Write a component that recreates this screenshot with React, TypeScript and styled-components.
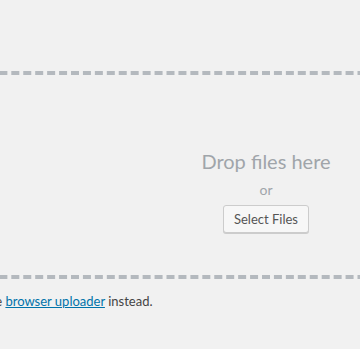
import React from 'react';
import styled, { createGlobalStyle } from 'styled-components';

const GlobalStyle = createGlobalStyle`
    html, body {
        margin: 0;
        padding: 0;
        background: #f1f1f1;
        overflow: hidden;
    }
    body {
        font-family: "Segoe UI", Lato, "Open Sans", sans-serif;
        color: #444;
        font-size: 13px;
        line-height: 1.4em;
    }
`;

const UploaderWrapper = styled.div`
    width: 1154px;
    margin-left: -311px;
    padding-top: 71px;
`;

const DropArea = styled.div`
    border: 4px dashed #b4b9be;
    height: 200px;
`;

const DropInside = styled.div`
    width: 250px;
    margin: 72px auto 0;
    text-align: center;
`;

const DropText = styled.p<{ $big?: boolean }>`
    margin: 5px auto;
    color: #a0a5aa;
    font-size: ${(p) => (p.$big ? '20px' : '14px')};
    line-height: ${(p) => (p.$big ? '28px' : '20px')};
`;

const SelectButton = styled.button`
    display: inline-block;
    height: 28px;
    margin: 0;
    padding: 0 10px 1px;
    font-family: inherit;
    font-size: 13px;
    line-height: 26px;
    color: #555;
    background: #f7f7f7;
    border: 1px solid #ccc;
    border-radius: 3px;
    box-shadow: 0 1px 0 #ccc;
    cursor: pointer;
    white-space: nowrap;
    &:hover {
        background: #fafafa;
        border-color: #999;
        color: #23282d;
    }
`;

const BypassNote = styled.p`
    margin: 13px 0;
    font-size: 13px;
    line-height: 1.5;
    a {
        color: #0073aa;
        text-decoration: underline;
    }
`;

export default function App() {
    return (
        <>
            <GlobalStyle />
            <UploaderWrapper>
                <DropArea>
                    <DropInside>
                        <DropText $big>Drop files here</DropText>
                        <DropText>or</DropText>
                        <DropText>
                            <SelectButton type="button">Select Files</SelectButton>
                        </DropText>
                    </DropInside>
                </DropArea>
                <BypassNote>
                    You are using the multi-file uploader. Problems? Try the{' '}
                    <a href="#">browser uploader</a> instead.
                </BypassNote>
            </UploaderWrapper>
        </>
    );
}
